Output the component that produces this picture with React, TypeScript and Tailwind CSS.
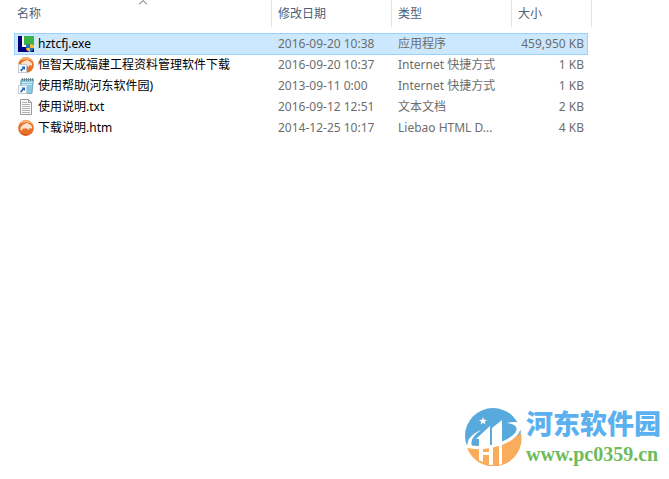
import type { ReactNode } from "react";

const uiFont = "font-['Noto_Sans','Noto_Sans_CJK_SC',sans-serif]";

function ShortcutArrow() {
  return (
    <g>
      <rect x="0.5" y="7.500" width="8" height="8" fill="#fff" stroke="#c3ccd6" />
      <path d="M3.500 9.500H7V13L5.800 11.800 3.200 14.400 2 13.200 4.700 10.700z" fill="#1a5fb4" />
    </g>
  );
}

function Leopard() {
  return (
    <g>
      <circle cx="8" cy="8" r="7.900" fill="#e8722a" />
      <path d="M1 4.500C3 1 6 0 9.500.4c3 .4 5.200 2.600 6 5.100C12.500 2 6 1 1 4.500z" fill="#f9b67a" />
      <path d="M2.500 8C3.500 5.500 5.500 4 8 3.500l2-.8.5 1.300c2.200.4 3.600 1.800 3.700 4l-1 .8-1.600-.9-1.200 2.300-1.200-1.800C7.500 8.800 5.500 8 4.500 9L3.500 11C2.800 10.200 2.500 9 2.500 8z" fill="#fbe3cf" />
      <path d="M1 10.500c2 3.500 6 4.500 10 3.200-4 3.300-8.500 1.500-10-3.200z" fill="#c94f14" />
    </g>
  );
}

function Icon({ children }: { children: ReactNode }) {
  return (
    <svg viewBox="0 0 16 16" className="size-4 shrink-0" aria-hidden="true">
      {children}
    </svg>
  );
}

const exeIcon = (
  <Icon>
    <rect width="16" height="16" fill="#00007f" />
    <rect x="4" y="0" width="12" height="11" fill="#fff" />
    <rect x="6" y="0" width="10" height="9" fill="#3ab54a" />
    <path d="M12 7.500c1.200 1 2.400 1.300 4 1.300V12c0 2-1.800 3.300-4 4-2.200-.7-4-2-4-4V8.800c1.600 0 2.800-.3 4-1.300z" fill="#2872b8" />
    <path d="M12 7.500c1.200 1 2.400 1.300 4 1.300V12h-4zM8 12h4v4c-2.200-.7-4-2-4-4z" fill="#f3bd35" />
  </Icon>
);

const leopardShortcutIcon = (
  <Icon>
    <Leopard />
    <ShortcutArrow />
  </Icon>
);

const noteShortcutIcon = (
  <Icon>
    <path d="M3 1.500h12.500L14 15.500H2z" fill="#86cbe2" stroke="#5b94a8" strokeWidth=".7" />
    <path d="M4 4.500h10.500M4 6.500h10" stroke="#c8eaf4" />
    <path d="M4.500 0v3M6.500 0v3M8.500 0v3M10.500 0v3M12.500 0v3M14.500 0v3" stroke="#5d7883" strokeWidth=".8" />
    <ShortcutArrow />
  </Icon>
);

const textIcon = (
  <Icon>
    <path d="M2.500.5h8l3 3v12h-11z" fill="#fafafa" stroke="#999" />
    <path d="M10.500.5v3h3" fill="none" stroke="#999" />
    <path d="M4 3.500h5M4 5.500h8M4 7.500h8M4 9.500h8M4 11.500h8M4 13.500h8" stroke="#b0b0b0" />
  </Icon>
);

const leopardIcon = (
  <Icon>
    <Leopard />
  </Icon>
);

const files = [
  { icon: exeIcon, name: "hztcfj.exe", date: "2016-09-20 10:38", type: "应用程序", size: "459,950 KB", selected: true },
  { icon: leopardShortcutIcon, name: "恒智天成福建工程资料管理软件下载", date: "2016-09-20 10:37", type: "Internet 快捷方式", size: "1 KB" },
  { icon: noteShortcutIcon, name: "使用帮助(河东软件园)", date: "2013-09-11 0:00", type: "Internet 快捷方式", size: "1 KB" },
  { icon: textIcon, name: "使用说明.txt", date: "2016-09-12 12:51", type: "文本文档", size: "2 KB" },
  { icon: leopardIcon, name: "下载说明.htm", date: "2014-12-25 10:17", type: "Liebao HTML D...", size: "4 KB" },
];

function HeaderCell({ label, sorted, span, first }: { label: string; sorted?: boolean; span?: number; first?: boolean }) {
  return (
    <th
      scope="col"
      colSpan={span}
      aria-sort={sorted ? "ascending" : undefined}
      className="relative h-[27px] border-r border-[#e5e5e5] p-0 text-left font-normal"
    >
      <button type="button" className={`block w-full text-left text-[#4c607a] ${first ? "pl-[3px]" : "pl-1.5"}`}>
        {label}
      </button>
      {sorted && (
        <svg viewBox="0 0 9 5" className="absolute top-0 left-1/2 h-[5px] w-[9px] -translate-x-1/2" aria-hidden="true">
          <path d="M.5 4.500l4-4 4 4" fill="none" stroke="#5a5a5a" />
        </svg>
      )}
    </th>
  );
}

function SiteLogo() {
  return (
    <svg viewBox="0 0 58 58" className="size-[58px] shrink-0" aria-hidden="true">
      <circle cx="29" cy="28" r="28" fill="#58a9dc" />
      <path d="M2 36C20 41 44 36 57 25A28 28 0 0 1 2 36z" fill="#f8ac5c" />
      <path d="M1 36C20 42 42 35 51 25 55 19 51 16 43 15 53 12 60 15 55 25 47 37 22 44 3 40z" fill="#fff" />
      <path d="M4 38C2 32 8 26 17 22 10 27 6 32 8 38z" fill="#fff" />
      <path d="M12 31L26 18v20H15v-7zM28 20L38 12v25H28z" fill="#fff" />
      <path d="M15 38h4v16l-4-2zM25 37h4v20h-4zM35 35h3v21l-3 1z" fill="#fff" />
      <path d="M19 44h6v3h-6z" fill="#fff" />
      <path d="M19 9l1 2.800 3 .2-2.400 1.700.9 2.800-2.500-1.700-2.500 1.700.9-2.800L15 12l3-.2z" fill="#fff" />
    </svg>
  );
}

export default function App() {
  return (
    <main className={`flex min-h-screen flex-col bg-white text-xs text-[#6d6d6d] ${uiFont}`}>
      <table className="ml-3.5 w-[578px] table-fixed border-separate border-spacing-0">
        <colgroup>
          <col className="w-[258px]" />
          <col className="w-[120px]" />
          <col className="w-[120px]" />
          <col className="w-[76px]" />
          <col className="w-1" />
        </colgroup>
        <thead>
          <tr>
            <HeaderCell label="名称" sorted first />
            <HeaderCell label="修改日期" />
            <HeaderCell label="类型" />
            <HeaderCell label="大小" span={2} />
          </tr>
        </thead>
        <tbody>
          <tr aria-hidden="true">
            <td colSpan={5} className="h-1.5 p-0" />
          </tr>
          {files.map((file) => {
            const cell = file.selected
              ? "h-[22px] border-y border-[#99d1ff] bg-[#cce8ff] pt-0.5 pb-0 align-top leading-4 whitespace-nowrap"
              : "h-[21px] pt-0.5 pb-0 align-top leading-4 whitespace-nowrap";
            return (
              <tr key={file.name} aria-selected={file.selected}>
                <td className={`${cell} pr-0 ${file.selected ? "border-l pl-[3px]" : "pl-1"}`}>
                  <div className="flex items-center gap-1 text-black">
                    {file.icon}
                    <span>{file.name}</span>
                  </div>
                </td>
                <td className={`${cell} pr-0 pl-1.5`}>{file.date}</td>
                <td className={`${cell} pr-0 pl-1.5`}>{file.type}</td>
                <td className={`${cell} pl-0 text-right ${file.selected ? "border-r pr-[3px]" : "pr-1"}`}>{file.size}</td>
                <td className="p-0" />
              </tr>
            );
          })}
        </tbody>
      </table>

      <footer className="mt-auto mr-2 mb-[9px] flex items-start gap-1 self-end">
        <SiteLogo />
        <div>
          <p className="font-['Noto_Sans_CJK_SC',sans-serif] text-[27px] leading-[30px] font-black text-[#5bb0f0]">河东软件园</p>
          <p className="font-['Liberation_Serif',serif] text-xl leading-8 font-bold text-[#6cbb5c]">www.pc0359.cn</p>
        </div>
      </footer>
    </main>
  );
}
